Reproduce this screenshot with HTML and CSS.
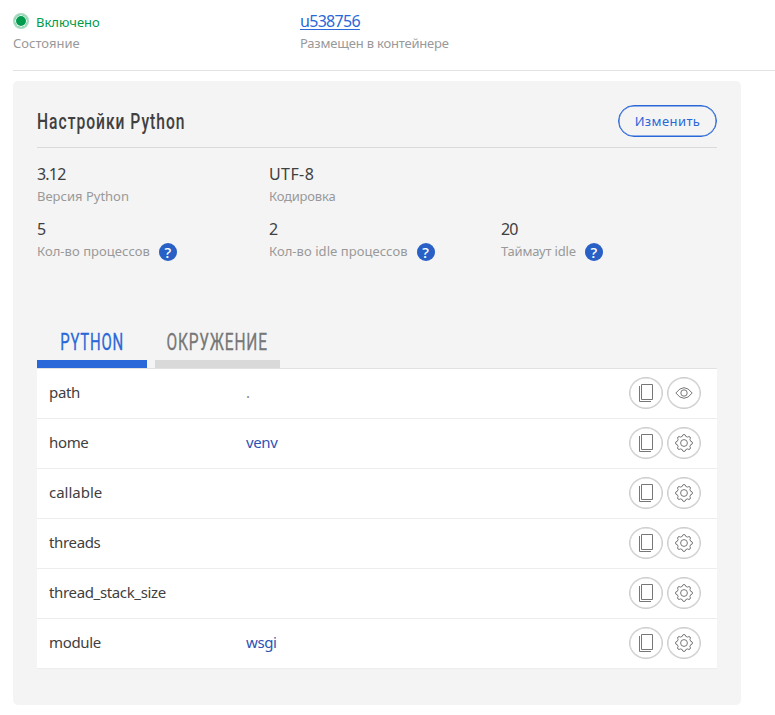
FILE: index.html
```html
<!DOCTYPE html>
<html lang="ru">
<head>
<meta charset="utf-8">
<title>Настройки Python</title>
<link rel="stylesheet" href="styles.css">
</head>
<body>
<svg class="defs" width="0" height="0">
  <symbol id="copy" viewBox="0 0 16 20"><path d="M3.500 1.500h11v15h-11zM1.500 3v15.500H13"/></symbol>
  <symbol id="eye" viewBox="0 0 20 20"><path d="M1.800 10Q10 -.6 18.200 10Q10 20.600 1.800 10z"/><circle cx="10" cy="10" r="3.200"/></symbol>
  <symbol id="gear" viewBox="0 0 20 20"><path d="M8.300 3.300Q8.500 1.500 10 1.500T11.700 3.300L13.500 4.100Q15 3 16 4T15.900 6.500L16.700 8.300Q18.500 8.500 18.500 10T16.700 11.700L15.900 13.500Q17 15 16 16T13.500 15.900L11.700 16.700Q11.500 18.500 10 18.500T8.300 16.700L6.500 15.900Q5 17 4 16T4.100 13.500L3.300 11.700Q1.500 11.500 1.500 10T3.300 8.300L4.100 6.500Q3 5 4 4T6.500 4.100z"/><circle cx="10" cy="10" r="3.400"/></symbol>
</svg>
<header class="summary">
  <div class="summary-item">
    <div class="value status"><i class="dot"></i><span>Включено</span></div>
    <div class="label wide"><span>Состояние</span></div>
  </div>
  <div class="summary-item">
    <div class="value"><a class="link" href="#">u538756</a></div>
    <div class="label"><span>Размещен в контейнере</span></div>
  </div>
</header>
<main class="panel">
  <div class="panel-head">
    <h1><span>Настройки Python</span></h1>
    <button class="edit">Изменить</button>
  </div>
  <div class="params">
    <div><div class="value">3.12</div><div class="label wide"><span>Версия Python</span></div></div>
    <div><div class="value utf">UTF-8</div><div class="label"><span>Кодировка</span></div></div>
    <div></div>
    <div><div class="value">5</div><div class="label wider"><span>Кол-во процессов</span><b class="help">?</b></div></div>
    <div><div class="value">2</div><div class="label wider"><span>Кол-во idle процессов</span><b class="help">?</b></div></div>
    <div><div class="value">20</div><div class="label"><span>Таймаут idle</span><b class="help">?</b></div></div>
  </div>
  <nav class="tabs">
    <div class="tab active"><span>PYTHON</span></div>
    <div class="tab env"><span>ОКРУЖЕНИЕ</span></div>
  </nav>
  <div class="table">
    <div class="row"><span class="name">path</span><span class="data dim">.</span><i class="btn"><svg width="16" height="20"><use href="#copy"/></svg></i><i class="btn"><svg width="20" height="20"><use href="#eye"/></svg></i></div>
    <div class="row"><span class="name">home</span><span class="data">venv</span><i class="btn"><svg width="16" height="20"><use href="#copy"/></svg></i><i class="btn"><svg width="20" height="20"><use href="#gear"/></svg></i></div>
    <div class="row"><span class="name loose">callable</span><span class="data"></span><i class="btn"><svg width="16" height="20"><use href="#copy"/></svg></i><i class="btn"><svg width="20" height="20"><use href="#gear"/></svg></i></div>
    <div class="row"><span class="name">threads</span><span class="data"></span><i class="btn"><svg width="16" height="20"><use href="#copy"/></svg></i><i class="btn"><svg width="20" height="20"><use href="#gear"/></svg></i></div>
    <div class="row"><span class="name">thread_stack_size</span><span class="data"></span><i class="btn"><svg width="16" height="20"><use href="#copy"/></svg></i><i class="btn"><svg width="20" height="20"><use href="#gear"/></svg></i></div>
    <div class="row"><span class="name">module</span><span class="data">wsgi</span><i class="btn"><svg width="16" height="20"><use href="#copy"/></svg></i><i class="btn"><svg width="20" height="20"><use href="#gear"/></svg></i></div>
  </div>
</main>
</body>
</html>
```
FILE: styles.css
```css
* { box-sizing: border-box; }
body { margin: 0; height: 715px; overflow: hidden; background: #fff; color: #404040; font-family: "Noto Sans", sans-serif; font-size: 15px; }
.defs { display: block; position: absolute; }
.summary { display: grid; grid-template-columns: 287px 1fr; height: 71px; margin-left: 13px; padding-top: 10px; border-bottom: 1px solid #e2e2e2; }
.value { height: 23px; font-size: 16px; line-height: 22px; letter-spacing: -.8px; }
.utf { letter-spacing: .4px; }
.label { display: flex; align-items: center; height: 20px; font-size: 13px; color: #999; letter-spacing: -.2px; white-space: nowrap; }
.wide { letter-spacing: 0; }
.wider { letter-spacing: .05px; }
.status { display: flex; align-items: center; font-size: 13px; letter-spacing: 0; color: #009b4d; }
.dot { width: 16px; height: 16px; margin: -2px 7px 0 0; border-radius: 50%; background: #009b4d; border: 2px solid #a3dabd; box-shadow: inset 0 0 0 1px #fff; }
.link { color: #2a67d8; text-underline-offset: 2px; letter-spacing: -.7px; }
.panel { width: 728px; height: 624px; margin: 10px 0 0 13px; padding: 24px; border-radius: 5px; background: #f4f4f4; }
.panel-head { display: flex; justify-content: space-between; height: 43px; border-bottom: 1px solid #dadada; }
h1 { margin: 0; width: 300px; font: 500 22px/34px Roboto, sans-serif; white-space: nowrap; }
h1 span { display: inline-block; transform: scaleX(.71); transform-origin: 0 50%; letter-spacing: 1.4px; }
.edit { width: 99px; height: 32px; padding: 0; border: 1px solid #2a67d8; border-radius: 16px; background: transparent; color: #2a67d8; font: 13px/28px "Noto Sans", sans-serif; letter-spacing: .4px; box-shadow: inset 0 0 0 .5px #2a67d8; }
.params { display: grid; grid-template-columns: 232px 232px 1fr; grid-template-rows: 55px 55px; padding-top: 15px; }
.help { display: flex; align-items: center; justify-content: center; width: 18px; height: 18px; margin: 1px 0 0 9px; border-radius: 50%; background: #2860c5; color: #fff; font: 500 15px/18px "Noto Sans", sans-serif; letter-spacing: 0; }
.tabs { display: flex; gap: 8px; margin-top: 50px; height: 45px; }
.tab { display: flex; justify-content: center; width: 110px; border-bottom: 8px solid #d9d9d9; color: #777; font: 400 23px/39px Roboto, sans-serif; white-space: nowrap; }
.tab span { transform: scaleX(.65); letter-spacing: 1.2px; -webkit-text-stroke: .3px; }
.active { border-color: #2a67d8; color: #2a67d8; }
.env { width: 125px; }
.env span { transform: scaleX(.675); }
.table { border-top: 1px solid #e2e2e2; background: #fff; }
.row { display: flex; align-items: center; height: 50px; padding: 0 16px 2px 12px; border-bottom: 1px solid #ededed; gap: 4px; }
.name { width: 193px; margin-top: -2px; letter-spacing: -.35px; }
.loose { letter-spacing: 0; }
.data { flex: 1; margin-top: -2px; color: #2d53b5; letter-spacing: -.4px; }
.dim { color: #888; }
.btn { display: flex; align-items: center; justify-content: center; width: 34px; height: 32px; border: 1px solid #ccc; border-radius: 50%; box-shadow: inset 0 0 0 .5px #ccc; }
.btn svg { fill: none; stroke: #777; stroke-width: 1; }
```
